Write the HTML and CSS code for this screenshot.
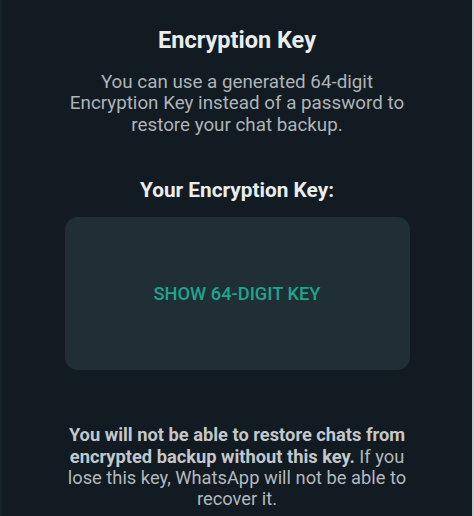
FILE: index.html
```html
<!DOCTYPE html>
<html lang="en">
<head>
  <meta charset="UTF-8">
  <meta name="viewport" content="width=device-width, initial-scale=1.0">
  <title>Encryption Key</title>
  <link rel="stylesheet" href="styles.css">
</head>

<body>
  <div class="screen">
    <h1 class="title">Encryption Key</h1>
    <p class="intro">You can use a generated 64-digit Encryption Key instead of a password to restore your chat backup.</p>

    <h2 class="key-label">Your Encryption Key:</h2>
    <div class="key-box">
      <button class="show-key">SHOW 64-DIGIT KEY</button>
    </div>

    <p class="warning"><b>You will not be able to restore chats from encrypted backup without this key.</b> If you lose this key, WhatsApp will not be able to recover it.</p>
  </div>
</body>
</html>
```

FILE: styles.css
```css
body {
  margin: 0;
  background: #111b21;
  font-family: Roboto, "Liberation Sans", sans-serif;
  height: 516px;
  overflow: hidden;
}

.screen {
  height: 516px;
  display: flex;
  flex-direction: column;
  align-items: center;
  text-align: center;
  border-left: 2px solid #17232a;
  border-right: 2px solid #c9cdcf;
  box-sizing: border-box;
}

.title {
  margin: 27px 0 0;
  font-size: 23.5px;
  line-height: 26px;
  font-weight: 700;
  color: #e9edef;
}

.intro {
  margin: 19px 0 0;
  width: 350px;
  font-size: 18.8px;
  line-height: 21.4px;
  color: #aeb4b8;
}

.key-label {
  margin: 42px 0 0;
  font-size: 20.8px;
  line-height: 24px;
  font-weight: 700;
  color: #e9edef;
}

.key-box {
  margin-top: 15px;
  width: 345px;
  height: 153px;
  border-radius: 13px;
  background: #202f35;
  display: flex;
  align-items: center;
  justify-content: center;
}

.show-key {
  background: none;
  border: none;
  padding: 0;
  font-family: Roboto, "Liberation Sans", sans-serif;
  font-size: 18.3px;
  font-weight: 500;
  color: #1fa48e;
  cursor: pointer;
}

.warning {
  margin: 54px 0 0;
  width: 350px;
  font-size: 18.3px;
  line-height: 21.4px;
  color: #b3b9bd;
}

.warning b {
  color: #c3c8cb;
}
```
